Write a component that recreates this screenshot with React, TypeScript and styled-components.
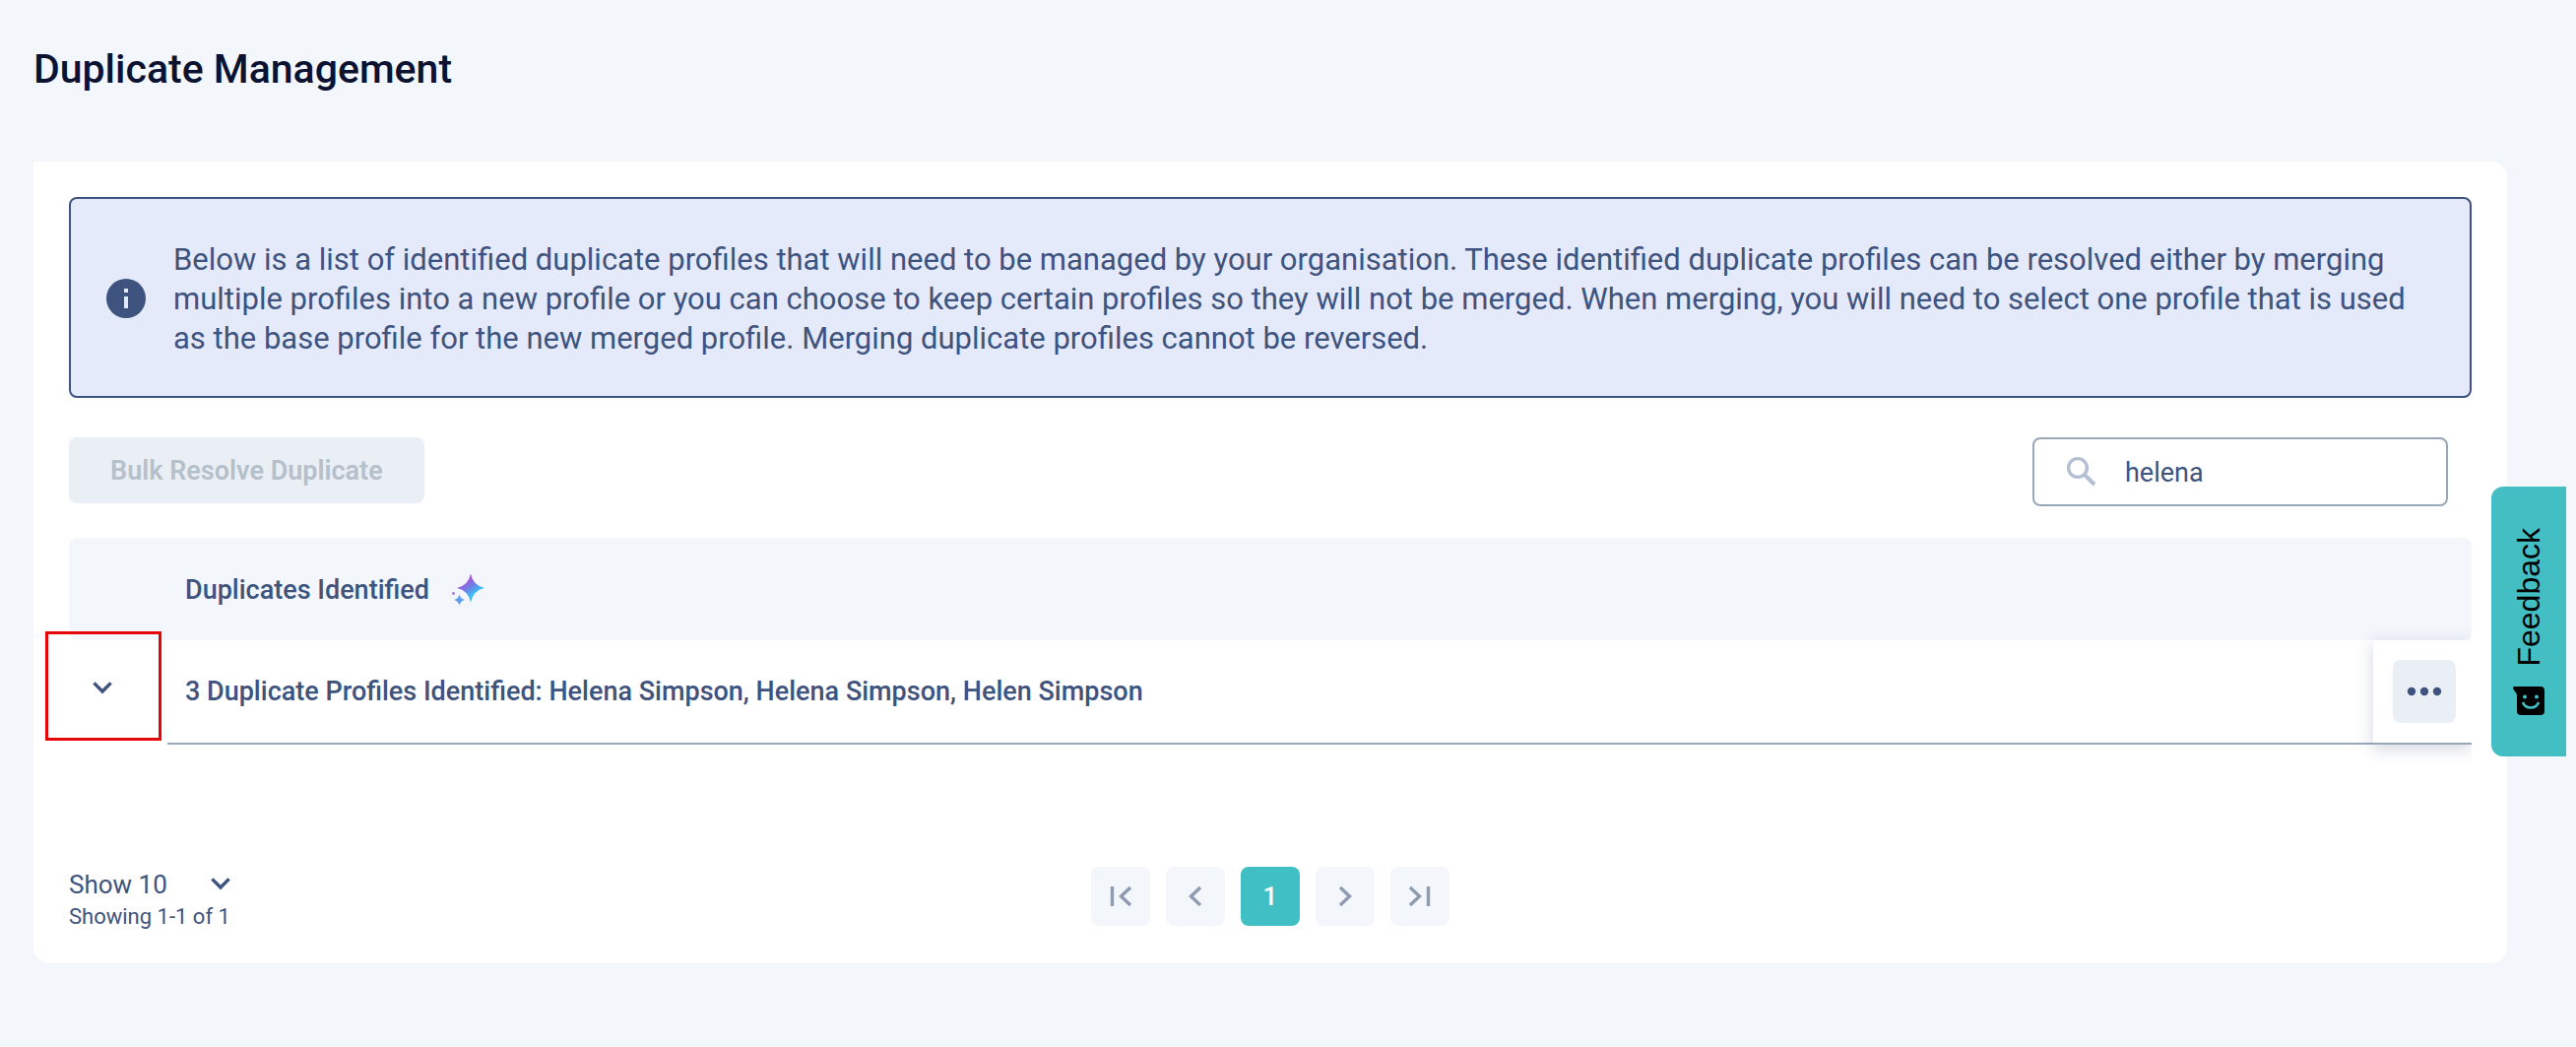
import React, { useState } from "react";
import styled, { createGlobalStyle } from "styled-components";

const navy = "#3e537e";
const steel = "#98a8b9";
const mist = "#f3f6fb";
const pale = "#eaeff6";
const teal = "#40c0c4";

const GlobalStyle = createGlobalStyle`
  *, *::before, *::after { box-sizing: border-box; }
  body {
    margin: 0;
    background: ${mist};
    color: ${navy};
    font-family: Roboto, "Liberation Sans", sans-serif;
    font-size: 27px;
    line-height: 36px;
  }
  button, input, select { font: inherit; color: inherit; }
`;

const Page = styled.main`
  padding: 42px 70px 84px 34px;
`;

const Title = styled.h1`
  margin: 0 0 66px;
  color: #0c1231;
  font-size: 41px;
  font-weight: 500;
  line-height: 56px;
`;

const Card = styled.section`
  padding: 36px 36px 32px;
  background: #fff;
  border-radius: 0 16px 16px 16px;
`;

const Notice = styled.div`
  display: flex;
  align-items: center;
  gap: 28px;
  padding: 40px 36px 38px;
  border: 2px solid ${navy};
  border-radius: 8px;
  background: #e4eafa;

  svg { flex: none; }
  p {
    margin: 0;
    padding-top: 2px;
    font-size: 31px;
    line-height: 40px;
  }
`;

const Toolbar = styled.div`
  display: flex;
  justify-content: space-between;
  align-items: flex-start;
  margin: 40px 24px 32px 0;
`;

const BulkButton = styled.button`
  padding: 17px 42px 16px;
  border: 0;
  border-radius: 8px;
  background: ${pale};
  line-height: 34px;
  font-weight: 600;

  &:disabled { color: #b6c0cb; }
`;

const SearchBox = styled.label`
  display: flex;
  align-items: center;
  gap: 22px;
  width: 422px;
  height: 70px;
  padding: 2px 28px 0;
  border: 2px solid ${steel};
  border-radius: 8px;

  svg { flex: none; }
  input {
    flex: 1;
    min-width: 0;
    padding: 0;
    border: 0;
    outline: 0;
    background: none;
  }
`;

const Table = styled.table`
  width: 100%;
  border-spacing: 0;
  text-align: left;
`;

const HeadCell = styled.th`
  height: 104px;
  padding: 2px 18px 0;
  background: ${mist};
  font-weight: 500;

  &:first-child { border-radius: 8px 0 0 8px; }
  &:last-child { border-radius: 0 8px 8px 0; }
`;

const HeadLabel = styled.span`
  display: flex;
  align-items: center;
  gap: 22px;
`;

const ToggleCell = styled.td`
  position: relative;
  width: 100px;
  height: 106px;
  padding: 0;
`;

const Highlight = styled.span`
  position: absolute;
  inset: -9px 6px 4px -24px;
  border: 3px solid #e60609;
  pointer-events: none;
`;

const IconButton = styled.button`
  display: flex;
  align-items: center;
  justify-content: center;
  width: 68px;
  height: 106px;
  padding: 0 0 10px;
  border: 0;
  background: none;
`;

const NameCell = styled.td`
  padding: 0 18px;
  border-bottom: 2px solid ${steel};
  font-weight: 500;
`;

const ActionCell = styled.td`
  width: 100px;
  padding: 0 16px 0 20px;
  border-bottom: 2px solid ${steel};
  background: #fff;
  box-shadow: 0 4px 16px rgba(62, 83, 126, 0.24);
  clip-path: inset(-24px 0 -24px -24px);
`;

const MoreButton = styled.button`
  display: flex;
  align-items: center;
  justify-content: center;
  width: 64px;
  height: 64px;
  padding: 0;
  border: 0;
  border-radius: 8px;
  background: ${pale};
`;

const Footer = styled.footer`
  display: grid;
  grid-template-columns: 1fr auto 1fr;
  align-items: center;
  margin-top: 118px;
`;

const PageInfo = styled.div`
  padding-top: 4px;
`;

const PageSize = styled.div`
  display: grid;
  width: 164px;
  align-items: center;

  select, svg { grid-area: 1 / 1; }
  select {
    appearance: none;
    padding: 2px 0 0;
    border: 0;
    background: none;
    font-size: 26px;
  }
  svg {
    justify-self: end;
    pointer-events: none;
  }
`;

const Range = styled.p`
  margin: 0;
  font-size: 22px;
  line-height: 30px;
`;

const Pager = styled.nav`
  display: flex;
  gap: 16px;
`;

const PageButton = styled.button<{ $current?: boolean }>`
  display: flex;
  align-items: center;
  justify-content: center;
  width: 60px;
  height: 60px;
  padding: 0;
  border: 0;
  border-radius: 8px;
  background: ${(p) => (p.$current ? teal : mist)};
  color: ${(p) => (p.$current ? "#fff" : "#8e9bb0")};
  font-size: 26px;
  font-weight: 500;
`;

const FeedbackTab = styled.button`
  position: fixed;
  top: 494px;
  right: 10px;
  display: flex;
  flex-direction: column;
  align-items: center;
  gap: 20px;
  width: 76px;
  padding: 42px 0;
  border: 0;
  border-radius: 12px 0 0 12px;
  background: #43bfc4;
  color: #000;
  font-family: "Liberation Sans", Arial, sans-serif;
  font-size: 32px;

  span {
    writing-mode: vertical-rl;
    transform: rotate(180deg);
  }
`;

const Chevron = () => (
  <svg width="20" height="13" viewBox="0 0 20 13" fill="none" stroke={navy} strokeWidth="3.4" aria-hidden="true">
    <path d="M1.4 1.4 10 10l8.6-8.6" />
  </svg>
);

const InfoIcon = () => (
  <svg width="40" height="40" viewBox="0 0 40 40" aria-hidden="true">
    <circle cx="20" cy="20" r="20" fill={navy} />
    <path d="M18 10h4v4h-4zM18 18h4v12h-4z" fill="#e4eafa" />
  </svg>
);

const SearchIcon = () => (
  <svg width="42" height="42" viewBox="0 0 42 42" fill="none" stroke="#b4bfd3" aria-hidden="true">
    <circle cx="16" cy="16" r="9.400" strokeWidth="3.400" />
    <path d="m23 23 10 10" strokeWidth="4" />
  </svg>
);

const Sparkles = () => (
  <svg width="36" height="36" viewBox="0 0 36 36" aria-hidden="true">
    <defs>
      <linearGradient id="spark" x1="13" y1="6" x2="26" y2="24" gradientUnits="userSpaceOnUse">
        <stop offset="0.1" stopColor="#b04fdc" />
        <stop offset="0.5" stopColor="#6f7fe6" />
        <stop offset="0.85" stopColor="#3cbdf2" />
      </linearGradient>
    </defs>
    <path d="M20 1.500Q22.500 13.500 34 16 22.500 18.500 20 30.500 17.500 18.500 6 16 17.500 13.500 20 1.500Z" fill="url(#spark)" />
    <path d="M8.500 22.500Q9.500 27 14 28 9.500 29 8.500 33.500 7.500 29 3 28 7.500 27 8.500 22.500Z" fill="#5d9cee" />
    <circle cx="2.500" cy="21.500" r="1.400" fill="#b06ae0" />
  </svg>
);

const Dots = () => (
  <svg width="36" height="10" viewBox="0 0 36 10" fill={navy} aria-hidden="true">
    <circle cx="5" cy="5" r="4.200" />
    <circle cx="18" cy="5" r="4.200" />
    <circle cx="31" cy="5" r="4.200" />
  </svg>
);

const pagerPaths = {
  first: "M11.500 10v20M30 11 20.500 20l9.500 9",
  previous: "M25 11 15.500 20l9.500 9",
  next: "M15 11l9.500 9-9.500 9",
  last: "M10 11l9.500 9-9.500 9M28.500 10v20",
};

const PagerIcon = ({ kind }: { kind: keyof typeof pagerPaths }) => (
  <svg width="40" height="40" viewBox="0 0 40 40" fill="none" stroke="currentColor" strokeWidth="3.4" aria-hidden="true">
    <path d={pagerPaths[kind]} />
  </svg>
);

const SmileBubble = () => (
  <svg width="32" height="29" viewBox="0 0 32 29" aria-hidden="true">
    <path d="M1 0h27a4 4 0 0 1 4 4v21a4 4 0 0 1-4 4H8a4 4 0 0 1-4-4V8L0 2Q0 0 1 0Z" />
    <circle cx="12" cy="10.500" r="2" fill="#43bfc4" />
    <circle cx="24" cy="10.500" r="2" fill="#43bfc4" />
    <path d="M10 16q2 5.500 8 5.500t8-5.500" fill="none" stroke="#43bfc4" strokeWidth="2.600" />
  </svg>
);

export default function App() {
  const [query, setQuery] = useState("helena");
  const [size, setSize] = useState("10");

  return (
    <>
      <GlobalStyle />
      <Page>
        <Title>Duplicate Management</Title>
        <Card>
          <Notice>
            <InfoIcon />
            <p>
              Below is a list of identified duplicate profiles that will need to be managed by your organisation. These
              identified duplicate profiles can be resolved either by merging multiple profiles into a new profile or
              you can choose to keep certain profiles so they will not be merged. When merging, you will need to select
              one profile that is used as the base profile for the new merged profile. Merging duplicate profiles cannot
              be reversed.
            </p>
          </Notice>

          <Toolbar>
            <BulkButton disabled>Bulk Resolve Duplicate</BulkButton>
            <SearchBox>
              <SearchIcon />
              <input type="text" aria-label="Search" value={query} onChange={(e) => setQuery(e.target.value)} />
            </SearchBox>
          </Toolbar>

          <Table>
            <thead>
              <tr>
                <HeadCell aria-label="Expand" />
                <HeadCell>
                  <HeadLabel>
                    Duplicates Identified <Sparkles />
                  </HeadLabel>
                </HeadCell>
                <HeadCell aria-label="Actions" />
              </tr>
            </thead>
            <tbody>
              <tr>
                <ToggleCell>
                  <IconButton aria-label="Expand row">
                    <Chevron />
                  </IconButton>
                  <Highlight />
                </ToggleCell>
                <NameCell>3 Duplicate Profiles Identified: Helena Simpson, Helena Simpson, Helen Simpson</NameCell>
                <ActionCell>
                  <MoreButton aria-label="More actions">
                    <Dots />
                  </MoreButton>
                </ActionCell>
              </tr>
            </tbody>
          </Table>

          <Footer>
            <PageInfo>
              <PageSize>
                <select aria-label="Rows per page" value={size} onChange={(e) => setSize(e.target.value)}>
                  <option value="10">Show 10</option>
                  <option value="25">Show 25</option>
                  <option value="50">Show 50</option>
                </select>
                <Chevron />
              </PageSize>
              <Range>Showing 1-1 of 1</Range>
            </PageInfo>
            <Pager aria-label="Pagination">
              <PageButton aria-label="First page"><PagerIcon kind="first" /></PageButton>
              <PageButton aria-label="Previous page"><PagerIcon kind="previous" /></PageButton>
              <PageButton $current aria-current="page">1</PageButton>
              <PageButton aria-label="Next page"><PagerIcon kind="next" /></PageButton>
              <PageButton aria-label="Last page"><PagerIcon kind="last" /></PageButton>
            </Pager>
          </Footer>
        </Card>
      </Page>
      <FeedbackTab>
        <span>Feedback</span>
        <SmileBubble />
      </FeedbackTab>
    </>
  );
}
